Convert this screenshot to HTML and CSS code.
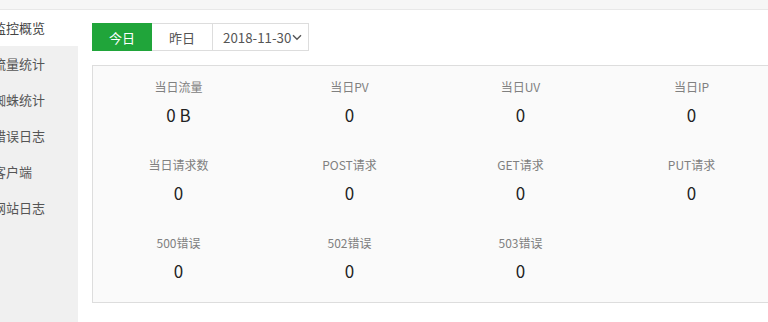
FILE: index.html
```html
<!DOCTYPE html>
<html lang="zh-CN">
<head>
  <meta charset="UTF-8">
  <title>网站监控报表</title>
  <link rel="stylesheet" href="styles.css">
</head>
<body>

  <div class="topbar"></div>

  <div class="layout">
    <ul class="side-menu">
      <li class="active">监控概览</li>
      <li>流量统计</li>
      <li>蜘蛛统计</li>
      <li>错误日志</li>
      <li>客户端</li>
      <li>网站日志</li>
    </ul>

    <div class="main">
      <div class="day-tabs">
        <span class="tab on">今日</span>
        <span class="tab">昨日</span>
        <span class="tab date">2018-11-30<svg class="caret" width="10" height="7" viewBox="0 0 10 7"><path d="M1 1.2 L5 5.2 L9 1.2" fill="none" stroke="#555" stroke-width="1.4"/></svg></span>
      </div>

      <div class="stat-panel">
        <div class="stat"><p class="label">当日流量</p><p class="num">0 B</p></div>
        <div class="stat"><p class="label">当日PV</p><p class="num">0</p></div>
        <div class="stat"><p class="label">当日UV</p><p class="num">0</p></div>
        <div class="stat"><p class="label">当日IP</p><p class="num">0</p></div>

        <div class="stat"><p class="label">当日请求数</p><p class="num">0</p></div>
        <div class="stat"><p class="label">POST请求</p><p class="num">0</p></div>
        <div class="stat"><p class="label">GET请求</p><p class="num">0</p></div>
        <div class="stat"><p class="label">PUT请求</p><p class="num">0</p></div>

        <div class="stat"><p class="label">500错误</p><p class="num">0</p></div>
        <div class="stat"><p class="label">502错误</p><p class="num">0</p></div>
        <div class="stat"><p class="label">503错误</p><p class="num">0</p></div>
      </div>
    </div>
  </div>

</body>
</html>
```

FILE: styles.css
```css
body { margin: 0; font-family: "Noto Sans CJK SC", "Noto Sans", sans-serif; color: #333; background: #fff; overflow: hidden; }
p { margin: 0; }

.topbar { height: 9px; background: #f6f6f6; border-bottom: 1px solid #e8e8e8; }

.layout { display: flex; }

.side-menu { list-style: none; margin: 0; padding: 0; width: 78px; height: 312px; background: #f0f0f0; flex-shrink: 0; overflow: hidden; }
.side-menu li { height: 36px; line-height: 36px; font-size: 13px; color: #555; text-indent: -7px; white-space: nowrap; }
.side-menu li.active { background: #fff; color: #444; }

.main { padding: 13px 0 0 14px; flex: 1; min-width: 0; }

.day-tabs { display: flex; height: 28px; }
.tab { display: flex; align-items: center; justify-content: center; width: 61px; border: 1px solid #ddd; border-left: none; font-size: 13px; color: #555; box-sizing: border-box; }
.tab:first-child { border-left: 1px solid #ddd; width: 60px; }
.tab.on { background: #20a53a; border-color: #20a53a; color: #fff; }
.tab.date { width: 96px; justify-content: flex-start; padding-left: 10px; font-size: 13.3px; gap: 1px; }
.caret { margin-top: 1px; }

.stat-panel { margin-top: 14px; width: 690px; height: 238px; box-sizing: border-box; border: 1px solid #ddd; background: #fafafa; display: grid; grid-template-columns: repeat(4, 171px); grid-auto-rows: 78px; padding-top: 10px; }
.stat { text-align: center; }
.stat .label { font-size: 12px; color: #808080; height: 22px; line-height: 21px; }
.stat .num { font-size: 17px; color: #222; height: 34px; line-height: 33px; }
```
